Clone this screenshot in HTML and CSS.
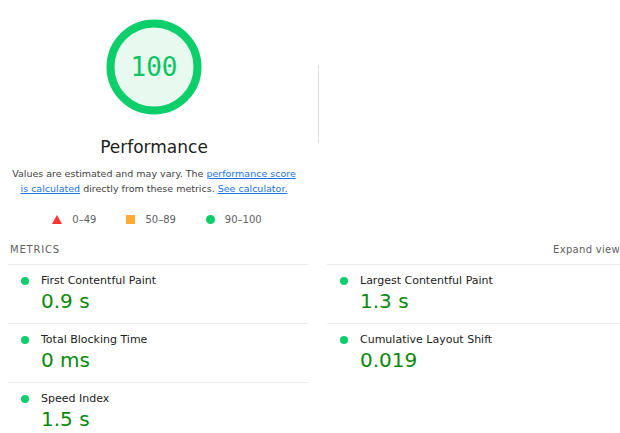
FILE: index.html
```html
<!DOCTYPE html>
<html>
<head>
<meta charset="utf-8">
<link rel="stylesheet" href="styles.css">
</head>
<body>
<div class="page">
  <div class="top">
    <div class="summary">
      <div class="gauge">
        <svg class="gauge-svg" width="96" height="96" viewBox="0 0 96 96">
          <circle cx="48" cy="48" r="43.5" fill="#e8f9ef" stroke="#0cce6b" stroke-width="8"/>
        </svg>
        <span class="gauge-value">100</span>
      </div>
      <div class="title">Performance</div>
      <p class="desc">Values are estimated and may vary. The <a href="#">performance score is calculated</a> directly from these metrics. <a href="#">See calculator.</a></p>
      <div class="legend">
        <span class="leg"><span class="tri"></span>0–49</span>
        <span class="leg"><span class="sq"></span>50–89</span>
        <span class="leg"><span class="dot"></span>90–100</span>
      </div>
    </div>
    <div class="divider"></div>
  </div>
  <div class="metrics-head">
    <span class="metrics-label">METRICS</span>
    <span class="expand">Expand view</span>
  </div>
  <div class="metrics">
    <div class="metric"><div class="m-title"><span class="mdot"></span>First Contentful Paint</div><div class="m-value">0.9 s</div></div>
    <div class="metric"><div class="m-title"><span class="mdot"></span>Largest Contentful Paint</div><div class="m-value">1.3 s</div></div>
    <div class="metric"><div class="m-title"><span class="mdot"></span>Total Blocking Time</div><div class="m-value">0 ms</div></div>
    <div class="metric"><div class="m-title"><span class="mdot"></span>Cumulative Layout Shift</div><div class="m-value">0.019</div></div>
    <div class="metric last"><div class="m-title"><span class="mdot"></span>Speed Index</div><div class="m-value">1.5 s</div></div>
  </div>
</div>
</body>
</html>
```
FILE: styles.css
```css
html, body {
  margin: 0;
  padding: 0;
  background: #fff;
}
body {
  font-family: "DejaVu Sans", Verdana, sans-serif;
  color: #212121;
  overflow: hidden;
}
.page {
  width: 612px;
  padding-left: 8px;
}
.top {
  display: flex;
  align-items: flex-start;
}
.summary {
  width: 292px;
  display: flex;
  flex-direction: column;
  align-items: center;
}
.gauge {
  position: relative;
  width: 96px;
  height: 96px;
  margin-top: 19px;
}
.gauge-svg {
  display: block;
}
.gauge-value {
  position: absolute;
  left: 0;
  right: 0;
  top: 0;
  line-height: 96px;
  text-align: center;
  font-family: "DejaVu Sans Mono", monospace;
  font-size: 26px;
  color: #0bc462;
}
.title {
  margin-top: 20px;
  font-size: 17px;
  line-height: 24px;
  color: #212121;
}
.desc {
  width: 292px;
  margin: 7px 0 0;
  font-size: 9.5px;
  line-height: 15px;
  text-align: center;
  color: #424242;
}
.desc a {
  color: #1a73e8;
}
.legend {
  display: flex;
  gap: 30px;
  margin-top: 18px;
  margin-left: 6px;
  font-size: 10px;
  color: #616161;
}
.leg {
  display: flex;
  align-items: center;
  gap: 10px;
}
.tri {
  width: 0;
  height: 0;
  border-left: 5px solid transparent;
  border-right: 5px solid transparent;
  border-bottom: 9px solid #ff3333;
}
.sq {
  width: 9px;
  height: 9px;
  background: #ffaa33;
}
.dot {
  width: 9px;
  height: 9px;
  border-radius: 50%;
  background: #0cce6b;
}
.divider {
  width: 1px;
  height: 78px;
  margin-top: 65px;
  margin-left: 18px;
  background: #e0e0e0;
}
.metrics-head {
  display: flex;
  justify-content: space-between;
  margin-top: 18px;
  padding-left: 2px;
  font-size: 10px;
  line-height: 14px;
  color: #616161;
}
.metrics-label {
  letter-spacing: 0.8px;
}
.expand {
  letter-spacing: 0.3px;
}
.metrics {
  display: grid;
  grid-template-columns: 300px 293px;
  column-gap: 19px;
  margin-top: 7px;
}
.metric {
  border-top: 1px solid #ebebeb;
  padding: 8px 0 9px 13px;
  height: 41px;
}
.m-title {
  display: flex;
  align-items: center;
  font-size: 11px;
  line-height: 16px;
  color: #212121;
}
.mdot {
  width: 8px;
  height: 8px;
  border-radius: 50%;
  background: #0cce6b;
  margin-right: 12px;
}
.m-value {
  padding-left: 20px;
  font-size: 20px;
  line-height: 25px;
  color: #0a8a0a;
}
```
